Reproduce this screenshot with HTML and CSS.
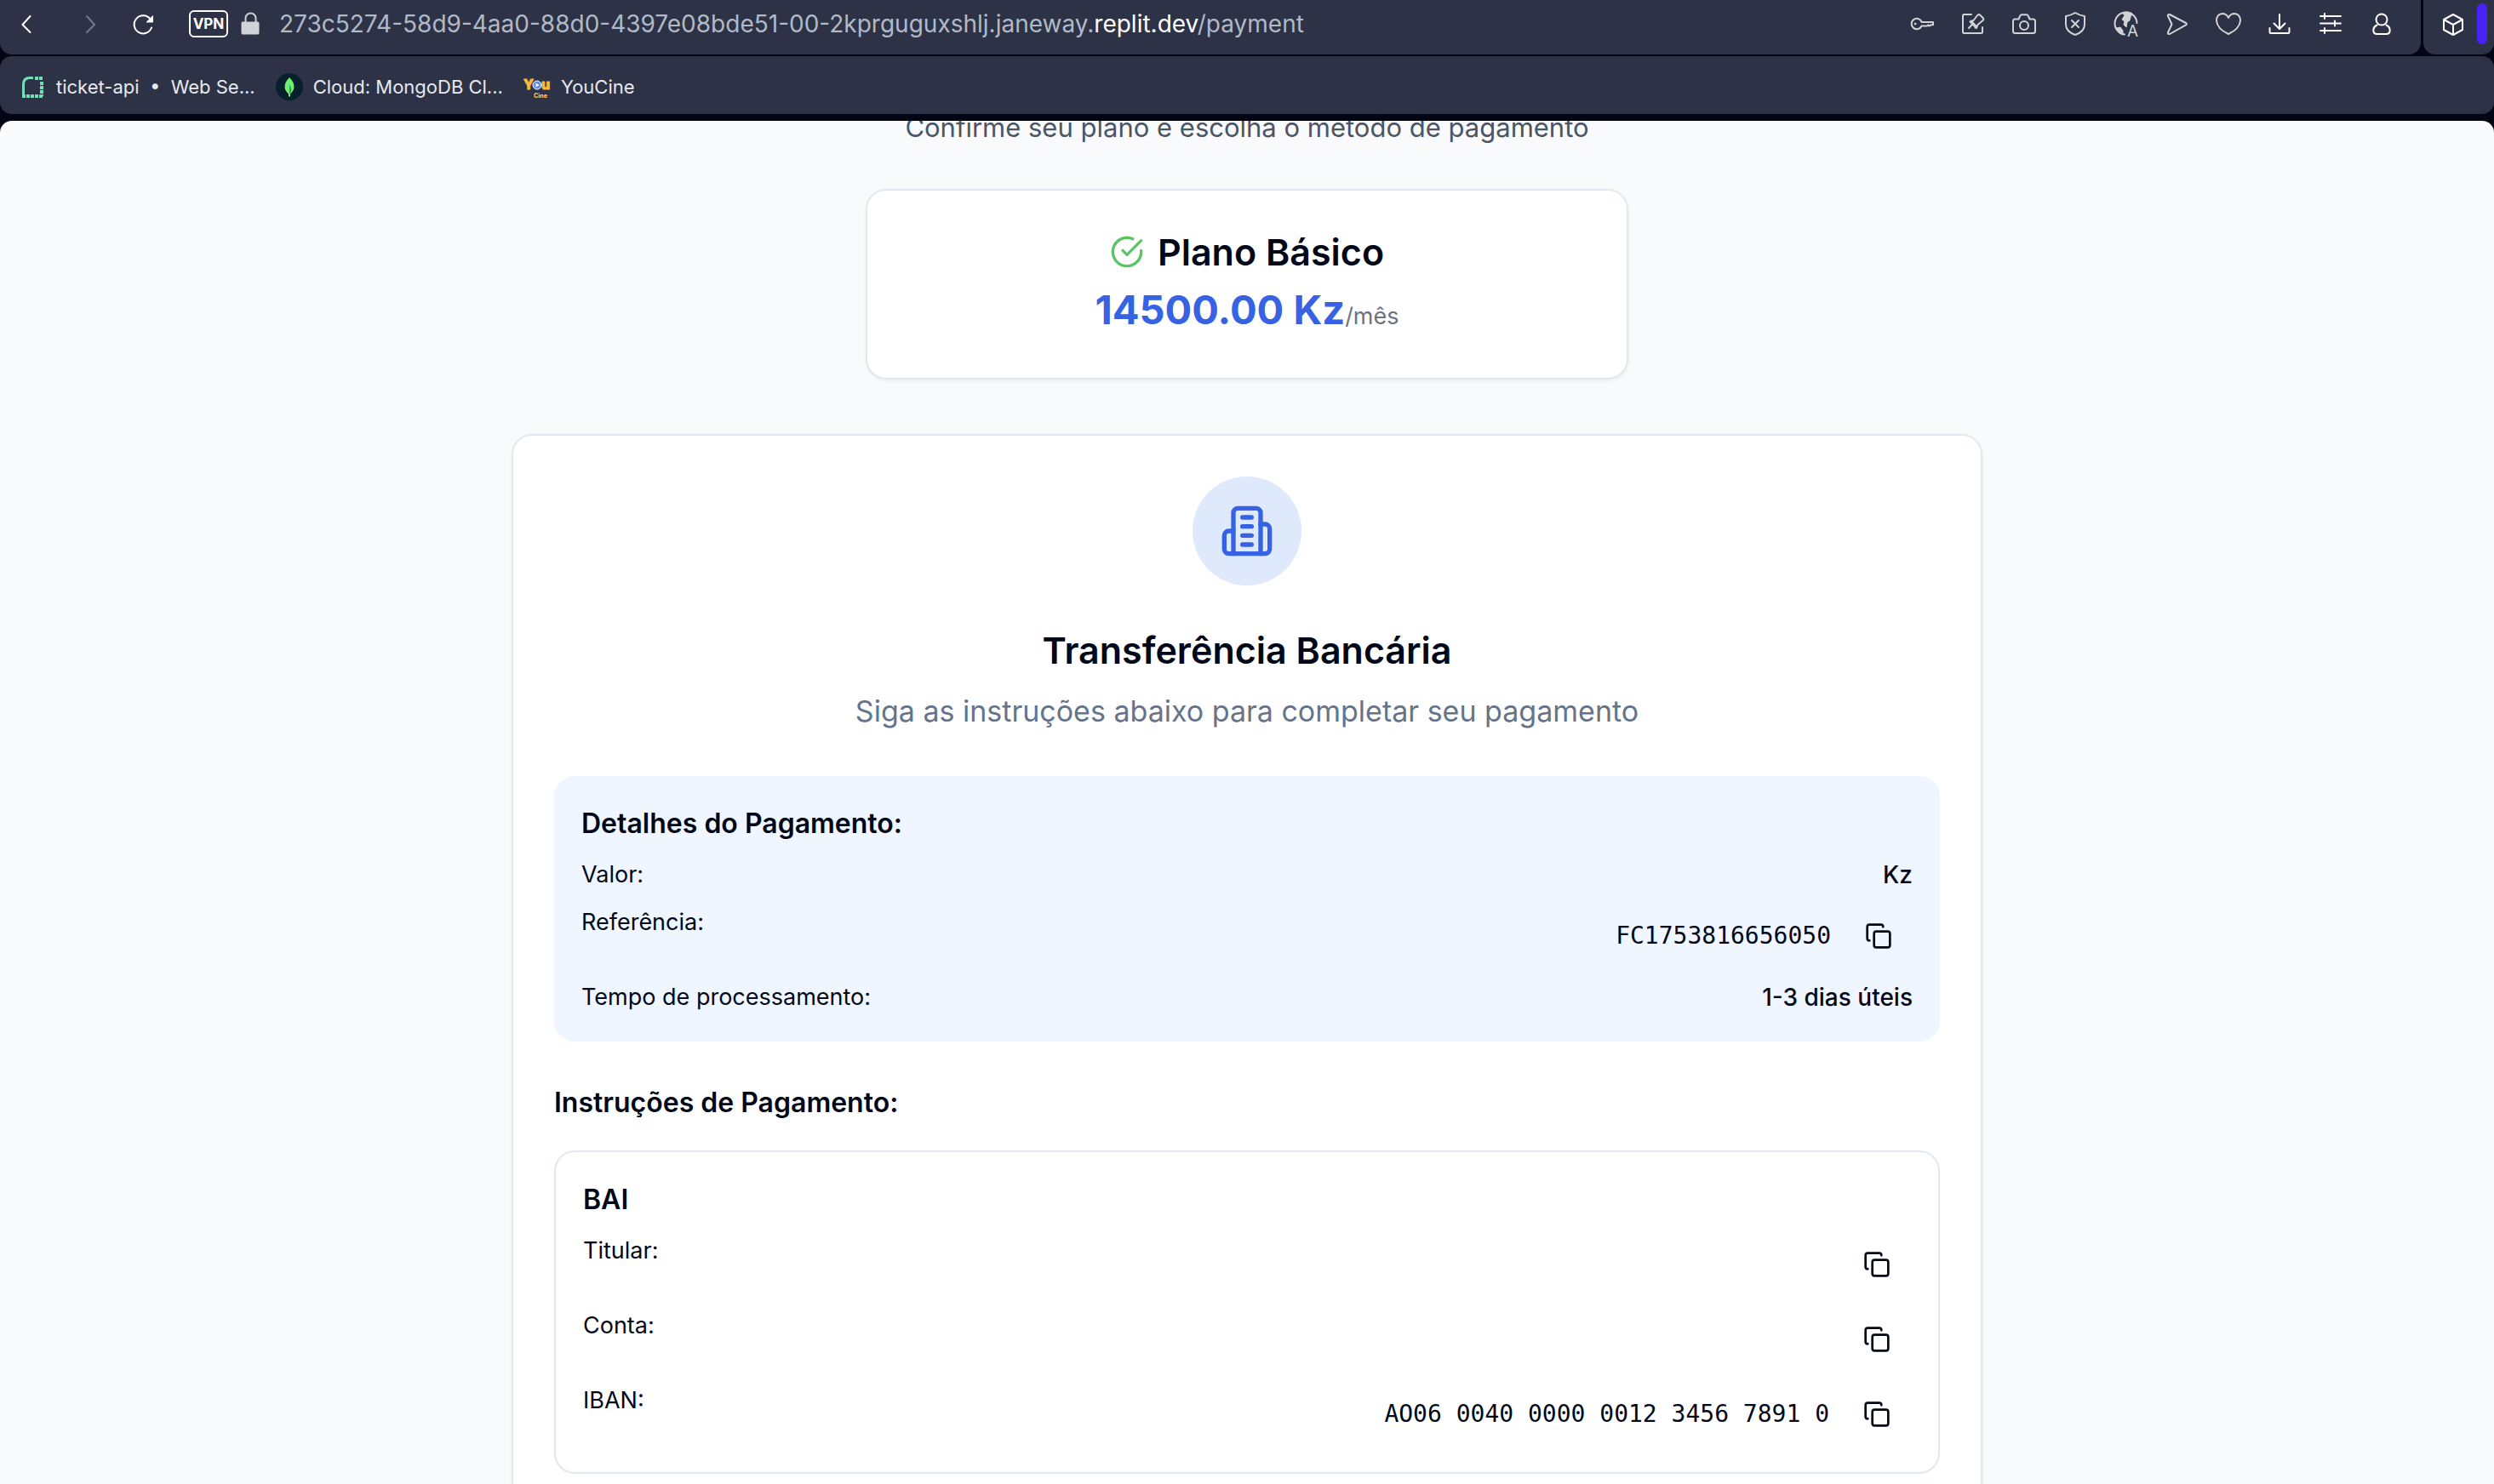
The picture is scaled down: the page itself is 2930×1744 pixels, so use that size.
FILE: index.html
```html
<!DOCTYPE html>
<html lang="pt">
<head>
<meta charset="utf-8">
<meta name="viewport" content="width=device-width, initial-scale=1">
<title>Pagamento</title>
<link rel="stylesheet" href="styles.css">
</head>
<body>
<svg class="sprite" aria-hidden="true">
  <symbol id="copy" viewBox="0 0 24 24">
    <rect width="14" height="14" x="8" y="8" rx="2" ry="2"/>
    <path d="M4 16c-1.100 0-2-.9-2-2V4c0-1.100.9-2 2-2h10c1.100 0 2 .9 2 2"/>
  </symbol>
</svg>

<header class="chrome">
  <div class="chrome-row">
    <div class="panel toolbar">
      <nav class="history" aria-label="Navegação">
        <button class="tool" type="button" aria-label="Voltar"><svg class="icon" viewBox="0 0 32 32"><path d="M20.500 7 11.500 17 20.500 26"/></svg></button>
        <button class="tool tool-off" type="button" aria-label="Avançar"><svg class="icon" viewBox="0 0 32 32"><path d="M11 7 20 17 11 26"/></svg></button>
        <button class="tool" type="button" aria-label="Recarregar"><svg class="icon" viewBox="0 0 32 32"><path d="M26 20.500A10.500 10.500 0 1 1 24.500 10.500"/><path class="solid" d="M27.500 7v7h-7z"/></svg></button>
      </nav>
      <button class="vpn" type="button">VPN</button>
      <svg class="icon lock" viewBox="0 0 32 32"><path d="M10.500 15V9.500a5.500 5.500 0 0 1 12 0V15"/><rect class="solid" x="6" y="14" width="20" height="14" rx="1"/></svg>
      <p class="url">273c5274-58d9-4aa0-88d0-4397e08bde51-00-2kprguguxshlj.janeway.<span class="host">replit.dev</span>/payment</p>
      <div class="actions">
        <button class="tool tool-dim" type="button" aria-label="Senhas"><svg class="icon" viewBox="0 0 32 32"><path d="M15.500 13.500a6.200 6.200 0 1 0 0 5H22l1.500-1.200 1.500 1.200 1.500-1.200 2.500 0v-3.300H15.500"/><circle class="solid" cx="8" cy="16" r="1"/></svg></button>
        <button class="tool tool-dim" type="button" aria-label="Pinboard"><svg class="icon" viewBox="0 0 32 32"><path d="M14 5H5.500a1.500 1.500 0 0 0-1.500 1.500v19A1.500 1.500 0 0 0 5.500 27h20a1.500 1.500 0 0 0 1.500-1.500V20M11 21l5-5.500M13.500 12.500l7 7-2 1M12.500 13.500l4-1.500 5-6.500q1.500-1 3 .5l3 3q1.500 1.500 0 3l-6 5-1.500 4z"/></svg></button>
        <button class="tool tool-dim" type="button" aria-label="Captura"><svg class="icon" viewBox="0 0 32 32"><path d="M4.500 10.500H9.500L11 7q.7-1.800 2.500-1.800h5q1.800 0 2.500 1.800l1.500 3.500H26.500a2.500 2.500 0 0 1 2.500 2.500v11.500a2.500 2.500 0 0 1-2.500 2.500H5.500A2.500 2.500 0 0 1 3 24.500V13q0-2 1.500-2.500z"/><circle cx="16" cy="18" r="5"/></svg></button>
        <button class="tool tool-dim" type="button" aria-label="Proteção"><svg class="icon" viewBox="0 0 32 32"><path d="M16 3q5 3 11 4v10q0 8-11 12Q5 25 5 17V7q6-1 11-4zM12 12l8 8M20 12l-8 8"/></svg></button>
        <button class="tool tool-dim" type="button" aria-label="Traduzir"><svg class="icon" viewBox="0 0 32 32"><path d="M14 28.500A13 13 0 1 1 28.500 15"/><path class="solid" d="M11 3q7-2.500 12 1l-2 4-1 4-3 2-1 6-3-3 1-4-3-2 3-5zM4 21l5-1 3 4 0 5-4-2z"/><text class="globe-letter" x="17" y="31">A</text></svg></button>
        <button class="tool tool-dim" type="button" aria-label="Enviar"><svg class="icon" viewBox="0 0 32 32"><path d="M5 7q-.5-2.500 2-2l19 10q2 1.200 0 2.400L7 28q-2.500.5-2-2l4.500-9.500z"/></svg></button>
        <button class="tool tool-dim" type="button" aria-label="Favoritos"><svg class="icon" viewBox="0 0 32 32"><path d="M16 9q2-5 7.500-5Q30 5 30 12.500 29 22 16 28 3 22 2 12.500 2 5 8.500 4 14 4 16 9z"/></svg></button>
        <button class="tool" type="button" aria-label="Transferências"><svg class="icon" viewBox="0 0 32 32"><path d="M16 5v16M9.500 15.500 16 22l6.500-6.500M4.500 21v4.500q0 1.500 1.500 1.500h20q1.500 0 1.500-1.500V21"/></svg></button>
        <button class="tool" type="button" aria-label="Configuração"><svg class="icon" viewBox="0 0 32 32"><path d="M4 7h24M4 15.500h24M4 24h24M9 4v6M21 12.500v6M9 21v6"/></svg></button>
        <button class="tool" type="button" aria-label="Perfil"><svg class="icon" viewBox="0 0 32 32"><circle cx="16" cy="11" r="6.500"/><path d="M10.500 17.500Q5.500 20 6.500 25q.5 3 4.500 3h10q4 0 4.500-3 1-5-4-7.500"/></svg></button>
      </div>
    </div>
    <div class="panel side">
      <button class="tool" type="button" aria-label="Extensões"><svg class="icon" viewBox="0 0 32 32"><path d="m16 5 11 6v12l-11 6-11-6V11zM5 11l11 6 11-6M16 17v12"/></svg></button>
      <span class="side-bar"></span>
    </div>
  </div>
  <nav class="panel bookmarks" aria-label="Marcadores">
    <a class="bookmark" href="#"><svg class="icon bm-ticket" viewBox="0 0 32 32"><path class="bm-solid" d="M5.500 29V13q0-7.500 7.500-7.500h4"/><path class="bm-dots" d="M19 6h10M27 10v17M4 27h25"/></svg>ticket-api &nbsp;•&nbsp; Web Se...</a>
    <a class="bookmark" href="#"><svg class="icon" viewBox="0 0 32 32"><circle cx="16" cy="16" r="16" fill="#07202b" stroke="none"/><path d="M16 5q5.500 5.500 5.500 11 0 4.500-4.500 8.500v3h-2v-3q-4.500-4-4.500-8.500Q10.500 10.500 16 5z" fill="#6cf172" stroke="none"/><path d="M16 13v12q4-4 1-10z" fill="#3a9a4e" stroke="none"/></svg>Cloud: MongoDB Cl...</a>
    <a class="bookmark" href="#"><svg class="icon" viewBox="0 0 32 32"><text class="bm-you" x="0" y="19">Y</text><text class="bm-you" x="21" y="19">u</text><text class="bm-cine" x="12" y="29">Cine</text><circle cx="16" cy="14" r="5" fill="#5b8def" stroke="#fff" stroke-width="1"/><path d="M14.500 11.500v5l4-2.500z" fill="#fff" stroke="none"/></svg>YouCine</a>
  </nav>
</header>

<main class="page">
  <div class="content">
    <p class="lead">Confirme seu plano e escolha o método de pagamento</p>

    <section class="card plan">
      <h2 class="title plan-title"><svg class="check" viewBox="0 0 24 24"><path d="M22 11.080V12a10 10 0 1 1-5.930-9.140"/><path d="m9 11 3 3L22 4"/></svg>Plano Básico</h2>
      <p class="price">14500.00 Kz<span class="period">/mês</span></p>
    </section>

    <section class="card transfer">
      <header class="transfer-head">
        <span class="badge"><svg class="building" viewBox="0 0 24 24"><path d="M6 22V4a2 2 0 0 1 2-2h8a2 2 0 0 1 2 2v18Z"/><path d="M6 12H4a2 2 0 0 0-2 2v6a2 2 0 0 0 2 2h2"/><path d="M18 9h2a2 2 0 0 1 2 2v9a2 2 0 0 1-2 2h-2"/><path d="M10 6h4M10 10h4M10 14h4M10 18h4"/></svg></span>
        <h2 class="title">Transferência Bancária</h2>
        <p class="subtitle">Siga as instruções abaixo para completar seu pagamento</p>
      </header>

      <div class="box details">
        <h3 class="heading">Detalhes do Pagamento:</h3>
        <dl class="rows">
          <div class="row"><dt>Valor:</dt><dd class="strong">Kz</dd></div>
          <div class="row"><dt>Referência:</dt><dd class="value"><code>FC1753816656050</code><button class="copy" type="button" aria-label="Copiar referência"><svg class="icon"><use href="#copy"/></svg></button></dd></div>
          <div class="row"><dt>Tempo de processamento:</dt><dd class="strong">1-3 dias úteis</dd></div>
        </dl>
      </div>

      <div class="instructions">
        <h3 class="heading">Instruções de Pagamento:</h3>
        <div class="box bank">
          <h4 class="heading">BAI</h4>
          <dl class="rows">
            <div class="row"><dt>Titular:</dt><dd class="value"><button class="copy" type="button" aria-label="Copiar titular"><svg class="icon"><use href="#copy"/></svg></button></dd></div>
            <div class="row"><dt>Conta:</dt><dd class="value"><button class="copy" type="button" aria-label="Copiar conta"><svg class="icon"><use href="#copy"/></svg></button></dd></div>
            <div class="row"><dt>IBAN:</dt><dd class="value"><code>AO06 0040 0000 0012 3456 7891 0</code><button class="copy" type="button" aria-label="Copiar IBAN"><svg class="icon"><use href="#copy"/></svg></button></dd></div>
          </dl>
        </div>
      </div>
    </section>
  </div>
</main>
</body>
</html>
```
FILE: styles.css
```css
* {
  box-sizing: border-box;
  margin: 0;
  padding: 0;
}

body {
  display: flex;
  flex-direction: column;
  height: 100vh;
  overflow: hidden;
  background: #020614;
  color: #020817;
  font-family: Inter, "Liberation Sans", sans-serif;
  font-size: 28px;
  line-height: 40px;
}

button {
  border: 0;
  background: none;
  color: inherit;
  font: inherit;
}

.sprite {
  display: none;
}

.icon {
  display: block;
  flex: none;
  width: 32px;
  height: 32px;
  overflow: visible;
  fill: none;
  stroke: currentColor;
  stroke-width: 2;
  stroke-linecap: round;
  stroke-linejoin: round;
}

.solid {
  fill: currentColor;
  stroke-width: 1;
}

/* Browser chrome */
.chrome {
  display: flex;
  flex: none;
  flex-direction: column;
  gap: 2px;
  padding-bottom: 8px;
  color: #fff;
}

.chrome-row {
  display: flex;
  gap: 3px;
}

.panel {
  display: flex;
  align-items: center;
  background: #2d3247;
}

.toolbar {
  flex: 1;
  height: 64px;
  padding: 0 30px 8px 15px;
  border-radius: 0 0 14px 14px;
}

.history {
  display: grid;
  grid-template-columns: 76px 61px 70px;
}

.tool {
  width: 32px;
  height: 32px;
}

.tool-off {
  color: #74798a;
}

.tool-dim,
.lock {
  color: #d2d3d6;
}

.vpn {
  width: 46px;
  height: 32px;
  border: 2px solid #fff;
  border-radius: 6px;
  font-size: 17px;
  font-weight: 700;
  line-height: 28px;
}

.lock {
  margin: 0 18px 0 10px;
}

.url {
  flex: 1;
  color: #b0bac7;
  font-size: 28px;
  white-space: nowrap;
}

.host {
  color: #fff;
}

.actions {
  display: flex;
  gap: 28px;
}

.globe-letter {
  fill: currentColor;
  stroke: none;
  font-size: 19px;
}

.side {
  gap: 12px;
  padding: 0 8px 8px 19px;
  border-radius: 0 0 14px 14px;
}

.side-bar {
  width: 12px;
  height: 48px;
  border-radius: 6px;
  background: #4a22f5;
}

.bookmarks {
  gap: 24px;
  height: 68px;
  padding: 4px 22px 0;
  border-radius: 14px;
}

.bookmark {
  display: flex;
  align-items: center;
  gap: 12px;
  color: #e6e9ee;
  font-size: 22px;
  text-decoration: none;
  white-space: nowrap;
}

.bm-ticket {
  color: #71dfb7;
  stroke-linecap: butt;
}

.bm-solid {
  stroke-width: 3;
}

.bm-dots {
  stroke-width: 4;
  stroke-dasharray: 4 1;
}

.bm-you {
  fill: #f5b93b;
  stroke: #f5b93b;
  stroke-width: 1;
  font-size: 16px;
  font-weight: 800;
}

.bm-cine {
  fill: #f7c64c;
  stroke: none;
  font-size: 7px;
  font-weight: 800;
}

/* Payment page, scrolled so that the lead line meets the top edge */
.page {
  flex: 1;
  min-height: 0;
  overflow: hidden;
  border-radius: 14px 14px 0 0;
  background: #f9fafc;
}

.content {
  display: flex;
  flex-direction: column;
  align-items: center;
  max-width: 1792px;
  margin: -16px auto 0;
  padding: 0 32px;
}

.lead {
  margin-bottom: 48px;
  color: #4b5563;
  font-size: 31px;
  line-height: 48px;
}

.card {
  width: 100%;
  padding: 48px;
  border: 2px solid #e2e8f0;
  border-radius: 24px;
  background: #fff;
  box-shadow: 0 2px 4px rgba(0, 0, 0, 0.05);
}

.title {
  font-size: 43px;
  font-weight: 600;
  line-height: 64px;
}

.plan {
  max-width: 896px;
  margin-bottom: 64px;
  text-align: center;
}

.plan-title {
  display: flex;
  align-items: center;
  justify-content: center;
  gap: 16px;
  margin-bottom: 12px;
  line-height: 48px;
}

.check {
  width: 40px;
  height: 40px;
  fill: none;
  stroke: #5dc466;
  stroke-width: 2;
  stroke-linecap: round;
  stroke-linejoin: round;
}

.price {
  color: #3662e3;
  font-size: 47px;
  font-weight: 700;
  line-height: 64px;
}

.period {
  color: #6b7280;
  font-size: 27px;
  font-weight: 400;
  line-height: 40px;
}

.transfer-head {
  display: flex;
  flex-direction: column;
  align-items: center;
  gap: 12px;
  margin-bottom: 48px;
}

.badge {
  display: grid;
  place-items: center;
  width: 128px;
  height: 128px;
  margin-bottom: 32px;
  border-radius: 50%;
  background: #dee9fc;
}

.building {
  width: 64px;
  height: 64px;
  fill: none;
  stroke: #3662e3;
  stroke-width: 2;
  stroke-linecap: round;
  stroke-linejoin: round;
}

.subtitle {
  color: #64748b;
  font-size: 34px;
  line-height: 56px;
}

.box {
  padding: 32px;
  border-radius: 24px;
}

.details {
  margin-bottom: 48px;
  background: #eff6ff;
}

.heading {
  font-size: 32px;
  font-weight: 600;
  line-height: 48px;
}

.box .heading {
  margin-bottom: 16px;
}

.instructions > .heading {
  margin-bottom: 32px;
}

.bank {
  border: 2px solid #e2e8f0;
}

.rows {
  display: flex;
  flex-direction: column;
  gap: 16px;
}

.row {
  display: flex;
  justify-content: space-between;
}

dt {
  font-size: 27px;
}

.strong {
  font-weight: 500;
}

.value {
  display: flex;
  align-items: center;
  gap: 16px;
}

code {
  font-family: "DejaVu Sans Mono", monospace;
  font-size: 28px;
}

.copy {
  display: grid;
  place-items: center;
  width: 80px;
  height: 72px;
  border-radius: 20px;
}
```
